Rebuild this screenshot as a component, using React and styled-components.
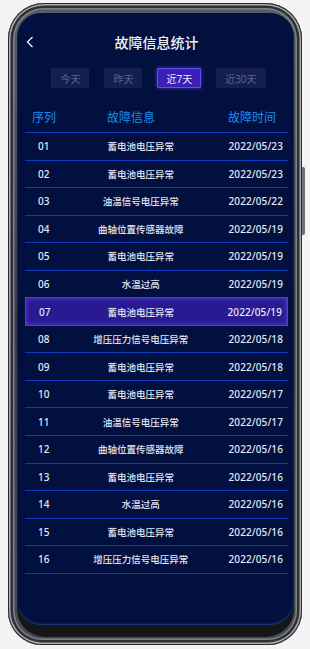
import React from "react";
import styled, { createGlobalStyle } from "styled-components";

const Global = createGlobalStyle`
  html, body { margin: 0; padding: 0; background: #f4f4f5; }
  body { font-family: "Noto Sans", "Noto Sans CJK SC", sans-serif; }
  * { box-sizing: border-box; }
`;

const Page = styled.div`
  width: 310px;
  height: 649px;
  padding: 3px 8px 0 8px;
`;

const Phone = styled.div`
  position: relative;
  width: 294px;
  height: 642px;
  border-radius: 36px 36px 34px 34px;
  padding: 10px 8px 8px 9px;
  background: linear-gradient(180deg, #5a5d63 0%, #3a3c42 50%, #4a4c52 100%);
  box-shadow: inset 0 0 0 1px #2a2b2f, inset 0 0 0 2.5px #a7aab0, inset 0 0 0 5px #2e3035,
    inset 0 0 0 6.5px #7d8086;
`;

const SideKey = styled.div`
  position: absolute;
  right: -3px;
  top: 164px;
  width: 3px;
  height: 68px;
  border-radius: 0 2px 2px 0;
  background: #6d6f75;
`;

const Bezel = styled.div`
  height: 100%;
  border-radius: 26px 26px 28px 28px;
  background: linear-gradient(180deg, #0a0a0d 0%, #15161a 100%);
  padding-bottom: 12px;
`;

const Screen = styled.div`
  height: 100%;
  border-radius: 24px;
  background: #02103f;
  overflow: hidden;
  padding: 19px 6px 0 8px;
  display: flex;
  flex-direction: column;
  box-shadow: inset 0 -1px 2px rgba(80, 170, 255, 0.35);
`;

const NavBar = styled.div`
  position: relative;
  height: 20px;
  display: flex;
  align-items: center;
  justify-content: center;
`;

const Back = styled.svg`
  position: absolute;
  left: 1px;
  top: 4px;
`;

const Title = styled.h1`
  margin: 0;
  font-family: "Noto Sans CJK SC", sans-serif;
  font-size: 14px;
  font-weight: 500;
  color: #eef1f8;
  line-height: 20px;
`;

const Tabs = styled.div`
  margin-top: 16px;
  display: flex;
  justify-content: center;
  gap: 15px;
  padding-left: 4px;
`;

const Tab = styled.div`
  height: 20px;
  padding: 0 8px;
  display: flex;
  align-items: center;
  font-size: 10px;
  font-family: "Noto Sans", "Noto Sans CJK SC", sans-serif;
  color: ${(p) => (p.$active ? "#eeeaff" : "#5a6390")};
  background: ${(p) => (p.$active ? "#3a1fb2" : "#141e52")};
  border: 1px solid ${(p) => (p.$active ? "#6a48f2" : "#141e52")};
  box-shadow: ${(p) => (p.$active ? "0 0 4px rgba(110,80,255,0.6)" : "none")};
  border-radius: 1px;
`;

const Table = styled.div`
  margin-top: 15px;
  display: flex;
  flex-direction: column;
`;

const HeadRow = styled.div`
  height: 30px;
  display: grid;
  grid-template-columns: 75px 1fr auto;
  align-items: center;
  padding: 0 12px 2px 7px;
  border-bottom: 1.5px solid #0b3ac0;
  font-family: "Noto Sans CJK SC", sans-serif;
  font-size: 12px;
  color: #1d8cec;
`;

const Row = styled.div`
  height: 27.56px;
  display: grid;
  grid-template-columns: 15px 1fr auto;
  align-items: center;
  padding: 0 5px 0 13px;
  border-bottom: 1.2px solid #0b3abd;
  color: #e6e9f2;
  font-weight: 500;
  ${(p) =>
    p.$active &&
    `
    background: #2a1a92;
    border: 1px solid #5638dc;
    box-shadow: inset 0 0 5px rgba(100, 70, 240, 0.8);
    margin-top: -1px;
    height: 28.56px;
  `}
`;

const Seq = styled.span`
  font-size: 10px;
`;

const Name = styled.span`
  justify-self: center;
  font-family: "Noto Sans CJK SC", sans-serif;
  font-size: 9.5px;
  color: #e2e5f0;
`;

const DateCell = styled.span`
  font-size: 10px;
  letter-spacing: 0.1px;
`;

const rows = [
  ["01", "蓄电池电压异常", "2022/05/23"],
  ["02", "蓄电池电压异常", "2022/05/23"],
  ["03", "油温信号电压异常", "2022/05/22"],
  ["04", "曲轴位置传感器故障", "2022/05/19"],
  ["05", "蓄电池电压异常", "2022/05/19"],
  ["06", "水温过高", "2022/05/19"],
  ["07", "蓄电池电压异常", "2022/05/19"],
  ["08", "增压压力信号电压异常", "2022/05/18"],
  ["09", "蓄电池电压异常", "2022/05/18"],
  ["10", "蓄电池电压异常", "2022/05/17"],
  ["11", "油温信号电压异常", "2022/05/17"],
  ["12", "曲轴位置传感器故障", "2022/05/16"],
  ["13", "蓄电池电压异常", "2022/05/16"],
  ["14", "水温过高", "2022/05/16"],
  ["15", "蓄电池电压异常", "2022/05/16"],
  ["16", "增压压力信号电压异常", "2022/05/16"],
];

const tabs = ["今天", "昨天", "近7天", "近30天"];

export default function App() {
  return (
    <Page>
      <Global />
      <Phone>
        <SideKey />
        <Bezel>
          <Screen>
            <NavBar>
              <Back width="8" height="12" viewBox="0 0 8 12">
                <path d="M6.5 1 L1.5 6 L6.5 11" fill="none" stroke="#e8ebf5" strokeWidth="1.4" />
              </Back>
              <Title>故障信息统计</Title>
            </NavBar>
            <Tabs>
              {tabs.map((t, i) => (
                <Tab key={t} $active={i === 2}>
                  {t}
                </Tab>
              ))}
            </Tabs>
            <Table>
              <HeadRow>
                <span>序列</span>
                <span>故障信息</span>
                <span>故障时间</span>
              </HeadRow>
              {rows.map(([n, name, d]) => (
                <Row key={n} $active={n === "07"}>
                  <Seq>{n}</Seq>
                  <Name>{name}</Name>
                  <DateCell>{d}</DateCell>
                </Row>
              ))}
            </Table>
          </Screen>
        </Bezel>
      </Phone>
    </Page>
  );
}
